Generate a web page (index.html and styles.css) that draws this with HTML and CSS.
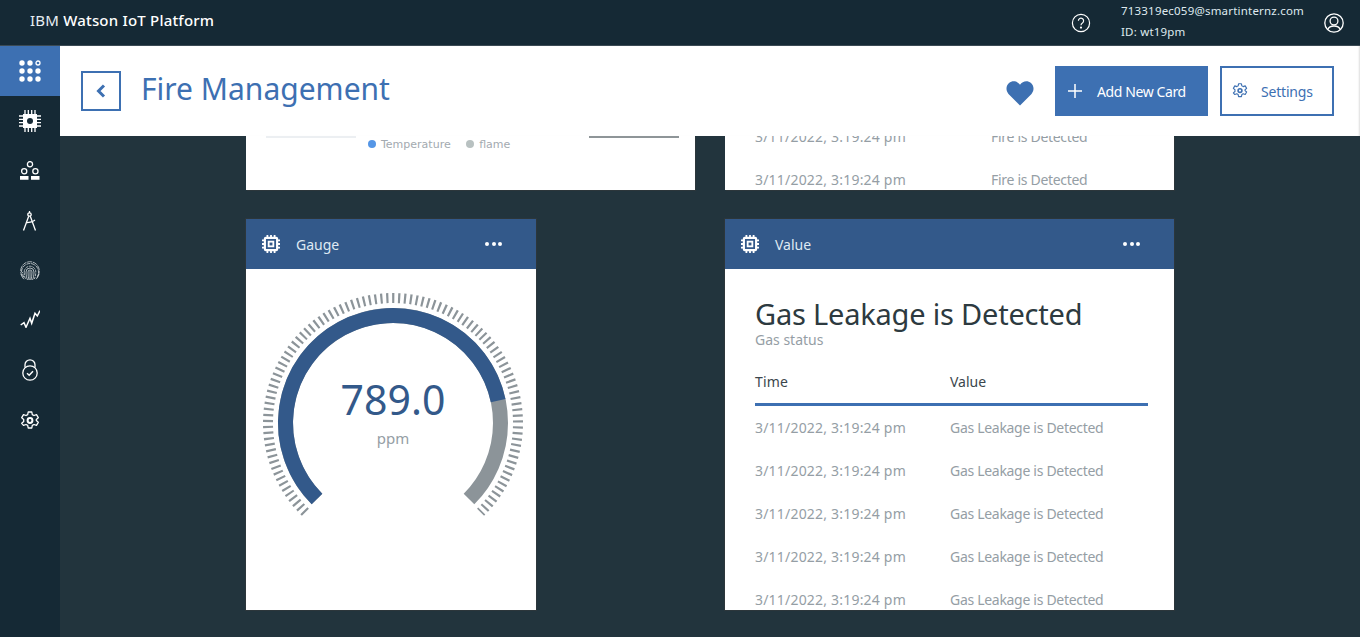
FILE: index.html
```html
<!DOCTYPE html>
<html>
<head>
  <title>IBM Watson IoT Platform</title>
  <link rel="stylesheet" href="styles.css">
</head>
<body>

  <svg class="sprites" width="0" height="0">
    <symbol id="chip" viewBox="0 0 20 20">
      <rect x="3.2" y="3.2" width="13.6" height="13.6" rx="1" fill="none" stroke="#fff" stroke-width="2.4"/>
      <rect x="7.4" y="7.4" width="5.2" height="5.2" fill="none" stroke="#fff" stroke-width="2"/>
      <path d="M6 0v3M10 0v3M14 0v3M6 17v3M10 17v3M14 17v3M0 6h3M0 10h3M0 14h3M17 6h3M17 10h3M17 14h3" stroke="#fff" stroke-width="2"/>
    </symbol>
    <symbol id="gear" viewBox="0 0 20 20">
      <path d="M8.2 1h3.600l.5 2.600 1.700.9 2.500-.9 1.800 3.100-2 1.700v1.200l2 1.700-1.800 3.100-2.500-.9-1.700.9-.5 2.600H8.200l-.5-2.600-1.700-.9-2.500.9L1.700 12.300l2-1.700V8.400l-2-1.700 1.800-3.100 2.500.9 1.700-.9z" stroke-linejoin="round"/>
      <circle cx="10" cy="9.5" r="2.4" stroke-width="2"/>
    </symbol>
  </svg>

  <div class="topbar">
    <div class="brand">IBM <b>Watson IoT Platform</b></div>
    <div class="top-right">
      <svg class="help-icon" width="20" height="20" viewBox="0 0 20 20" fill="none" stroke="#fff" stroke-width="1.2">
        <circle cx="10" cy="10" r="8.6"/>
        <path d="M7.4 7.8a2.6 2.6 0 1 1 4 2.2c-1 .6-1.4 1.1-1.4 2.2"/>
        <circle cx="10" cy="14.6" r=".5" fill="#fff"/>
      </svg>
      <div class="account">
        <div>713319ec059@smartinternz.com</div>
        <div>ID: wt19pm</div>
      </div>
      <svg class="user-icon" width="20" height="20" viewBox="0 0 20 20" fill="none" stroke="#fff" stroke-width="1.3">
        <circle cx="10" cy="10" r="9.2"/>
        <circle cx="10" cy="8" r="3.9"/>
        <path d="M3.8 16.4c1-2.6 3.4-3.4 6.2-3.4s5.2.8 6.2 3.4"/>
      </svg>
    </div>
  </div>

  <div class="layout">
    <div class="sidebar">
      <a class="side-item active">
        <svg width="22" height="22" viewBox="0 0 22 22" fill="#fff">
          <circle cx="3" cy="3" r="2.7"/><circle cx="11" cy="3" r="2.7"/><circle cx="19" cy="3" r="2" fill="none" stroke="#fff" stroke-width="1.3"/>
          <circle cx="3" cy="11" r="2.7"/><circle cx="11" cy="11" r="2.7"/><circle cx="19" cy="11" r="2.7"/>
          <circle cx="3" cy="19" r="2.7"/><circle cx="11" cy="19" r="2.7"/><circle cx="19" cy="19" r="2.7"/>
        </svg>
      </a>
      <a class="side-item">
        <svg width="22" height="22" viewBox="0 0 22 22">
          <rect x="4" y="4" width="14" height="14" fill="#fff"/>
          <circle cx="11" cy="11" r="3" fill="#152935"/>
          <path d="M6 0v22M9.3 0v22M12.7 0v22M16 0v22M0 6h22M0 9.3h22M0 12.7h22M0 16h22" stroke="#fff" stroke-width="1.3" fill="none" stroke-dasharray="4 14 4"/>
        </svg>
      </a>
      <a class="side-item">
        <svg width="20" height="20" viewBox="0 0 20 20" fill="none" stroke="#fff" stroke-width="1.3">
          <circle cx="10" cy="3.2" r="2.6"/>
          <circle cx="4.2" cy="10.3" r="2.6"/>
          <circle cx="15.4" cy="10.3" r="2.6"/>
          <path d="M0 15h8.5v3.7H0zM11 15h8.5v3.7H11z" fill="#fff" stroke="none"/>
        </svg>
      </a>
      <a class="side-item">
        <svg width="20" height="20" viewBox="0 0 20 20" fill="none" stroke="#fff" stroke-width="1.3">
          <circle cx="9.5" cy="3.5" r="1.7"/>
          <path d="M9.5 0v2M8.7 5.2L3.5 19.5M10.3 5.2L15.5 19.5M6 11.5c2 .2 4.500 0 7.500-1.500l1.500-1"/>
        </svg>
      </a>
      <a class="side-item">
        <svg width="20" height="20" viewBox="0 0 20 20" fill="none" stroke="#d5dadd" stroke-width=".8">
          <path d="M2.5 15.5A9.3 9.3 0 1 1 17.5 15.5" stroke-dasharray="5 .8"/>
          <path d="M1.5 11A8.5 8.5 0 0 1 18.500 11c0 2-.5 4-1.500 5.500M4 16.500c-1-1.500-1.500-3.500-1.500-5.500" stroke-dasharray="4 .8"/>
          <path d="M4.2 11A5.8 5.8 0 0 1 15.800 11c0 3-.5 5-1.500 7M5.500 17.800c-1-2-1.300-4.300-1.300-6.800" stroke-dasharray="3 .8"/>
          <path d="M6 11a4 4 0 0 1 8 0c0 3-.5 5.500-1.500 8M7.500 19C6.500 16.500 6 14 6 11"/>
          <path d="M8 11a2 2 0 0 1 4 0c0 3-.5 5.500-1 8M9 19c-.7-2.500-1-5-1-8"/>
          <path d="M10 10v9"/>
          <path d="M1 13c.5 2 1.500 3.700 3 5.200M19 13c-.5 2-1.500 3.700-3 5.200"/>
        </svg>
      </a>
      <a class="side-item">
        <svg class="trend-icon" width="20" height="18" viewBox="0 0 20 18" fill="none" stroke="#fff" stroke-width="1.5">
          <path d="M.7 15L4 12.7 6 17.3 10 8.3 11.7 13.3 15 3.3 17.3 6 20 .7"/>
        </svg>
      </a>
      <a class="side-item">
        <svg class="lock-icon" width="16" height="22" viewBox="0 0 16 22" fill="none" stroke="#fff" stroke-width="1.3">
          <circle cx="8" cy="14" r="7.2"/>
          <path d="M3 8.5V5.800a5 5 0 0 1 10 0v2.700"/>
          <path d="M5 14.300l2.200 2 3.800-4" stroke-width="1.5"/>
        </svg>
      </a>
      <a class="side-item">
        <svg width="20" height="20" fill="none" stroke="#fff" stroke-width="1.3"><use href="#gear"/></svg>
      </a>
    </div>

    <div class="main">
      <div class="page-head">
        <a class="back-btn">
          <svg width="10" height="14" viewBox="0 0 10 14" fill="none" stroke="#3d70b2" stroke-width="3"><path d="M8 1.5L2.5 7 8 12.5"/></svg>
        </a>
        <h1>Fire Management</h1>
        <svg class="heart" width="28" height="26" viewBox="0 0 28 26">
          <path d="M14 25.500L2.500 14C-.5 10.500 0 5.500 3 3c3.500-3 8.500-2 11 1.800C16.500 1 21.500 0 25 3c3 2.500 3.500 7.500.5 11z" fill="#3d70b2"/>
        </svg>
        <a class="btn btn-primary">
          <svg width="14" height="14" viewBox="0 0 14 14" stroke="#fff" stroke-width="1.5"><path d="M7 0v14M0 7h14"/></svg>
          Add New Card
        </a>
        <a class="btn btn-outline">
          <svg width="16" height="16" fill="none" stroke="#3d70b2" stroke-width="1.4"><use href="#gear"/></svg>
          Settings
        </a>
      </div>

      <div class="content">
        <div class="card-clip">
          <div class="chart-foot">
            <span class="axis axis-light"></span>
            <div class="legend">
              <span class="dot dot-blue"></span>Temperature
              <span class="dot dot-gray"></span>flame
            </div>
            <span class="axis axis-dark"></span>
          </div>
        </div>
        <div class="card-clip">
          <div class="rows">
            <div class="row"><span class="col-time">3/11/2022, 3:19:24 pm</span><span class="col-value">Fire is Detected</span></div>
            <div class="row"><span class="col-time">3/11/2022, 3:19:24 pm</span><span class="col-value">Fire is Detected</span></div>
          </div>
        </div>

        <div class="card card-gauge">
          <div class="card-head">
            <svg width="18" height="18"><use href="#chip"/></svg>
            <span class="card-title">Gauge</span>
            <span class="more"><i></i><i></i><i></i></span>
          </div>
          <div class="gauge">
            <svg width="290" height="290" viewBox="-147 -154 290 290">
              <path class="ticks" d="M-87.6 89.2A125 125 0 1 1 87.6 89.2"/>
              <path class="arc-rest" d="M-76 76A107.5 107.5 0 1 1 76 76"/>
              <path class="arc-value" d="M-76 76A107.5 107.5 0 1 1 105.15 -22.35"/>
            </svg>
            <div class="gauge-value">789.0</div>
            <div class="gauge-unit">ppm</div>
          </div>
        </div>

        <div class="card">
          <div class="card-head">
            <svg width="18" height="18"><use href="#chip"/></svg>
            <span class="card-title">Value</span>
            <span class="more"><i></i><i></i><i></i></span>
          </div>
          <div class="value-body">
            <div class="big-value">Gas Leakage is Detected</div>
            <div class="sub-value">Gas status</div>
            <div class="table-head"><span class="col-time2">Time</span><span>Value</span></div>
            <div class="row"><span class="col-time2">3/11/2022, 3:19:24 pm</span><span class="col-value">Gas Leakage is Detected</span></div>
            <div class="row"><span class="col-time2">3/11/2022, 3:19:24 pm</span><span class="col-value">Gas Leakage is Detected</span></div>
            <div class="row"><span class="col-time2">3/11/2022, 3:19:24 pm</span><span class="col-value">Gas Leakage is Detected</span></div>
            <div class="row"><span class="col-time2">3/11/2022, 3:19:24 pm</span><span class="col-value">Gas Leakage is Detected</span></div>
            <div class="row"><span class="col-time2">3/11/2022, 3:19:24 pm</span><span class="col-value">Gas Leakage is Detected</span></div>
          </div>
        </div>
      </div>
    </div>
  </div>

</body>
</html>
```
FILE: styles.css
```css
* {
  box-sizing: border-box;
}

body {
  font-family: "Noto Sans", Roboto, sans-serif;
  background-color: #22343d;
  margin: 0;
  height: 637px;
  overflow: hidden;
}

.sprites {
  position: absolute;
}

.topbar {
  background-color: #152935;
  border-bottom: 1px solid #3b4a54;
  height: 46px;
  display: flex;
  align-items: center;
  justify-content: space-between;
  color: #fff;
}

.brand {
  margin: 0 0 5px 30px;
  font-size: 15px;
  letter-spacing: 0.2px;
  color: #e8eef3;
}

.brand b {
  font-weight: 500;
  color: #fff;
}

.top-right {
  display: flex;
  align-items: center;
}

.account {
  margin: 0 19px 4px 30px;
  font-size: 11.5px;
  line-height: 21px;
  color: #dfe9ef;
  width: 184px;
  letter-spacing: 0.2px;
}

.user-icon {
  margin-right: 16px;
}

.layout {
  display: flex;
  height: 591px;
}

.sidebar {
  width: 60px;
  background-color: #152935;
  flex: none;
}

.side-item {
  display: flex;
  align-items: center;
  justify-content: center;
  height: 50px;
}

.side-item.active {
  background-color: #3d70b2;
}

.trend-icon {
  margin-bottom: 4px;
}

.lock-icon {
  margin-bottom: 2px;
}

.main {
  flex: 1;
  min-width: 0;
}

.page-head {
  background-color: #fff;
  height: 90px;
  display: flex;
  align-items: center;
  padding-left: 21px;
  box-shadow: inset -2px 0 2px -1px #ddd;
}

.back-btn {
  width: 40px;
  height: 40px;
  border: 2px solid #3d70b2;
  display: flex;
  align-items: center;
  justify-content: center;
  flex: none;
}

h1 {
  font-size: 30px;
  font-weight: 400;
  color: #3d70b2;
  margin: 0 0 6px 20px;
  flex: 1;
}

.heart {
  margin-right: 21px;
  margin-top: 3px;
}

.btn {
  height: 50px;
  display: flex;
  align-items: center;
  font-size: 14px;
}

.btn-primary {
  width: 153px;
  background-color: #3d70b2;
  color: #fff;
  padding-left: 13px;
  gap: 15px;
  margin-right: 12px;
  letter-spacing: -0.4px;
}

.btn-outline {
  width: 114px;
  border: 2px solid #3d70b2;
  color: #3d70b2;
  padding-left: 10px;
  gap: 13px;
  margin-right: 26px;
  letter-spacing: -0.2px;
}

.content {
  display: grid;
  grid-template-columns: 449px 449px;
  grid-template-rows: 54px 391px;
  column-gap: 30px;
  row-gap: 29px;
  padding: 0 0 0 186px;
  height: 501px;
  overflow: hidden;
}

.card-clip {
  background-color: #fff;
  overflow: hidden;
  display: flex;
  flex-direction: column;
  justify-content: flex-end;
  box-shadow: 1px 1px 0 #2c363b;
}

.chart-foot {
  height: 54px;
  display: flex;
  padding: 0 16px 0 20px;
}

.axis {
  width: 90px;
  height: 2px;
}

.axis-light {
  background-color: #eceff2;
}

.axis-dark {
  background-color: #8e9598;
}

.legend {
  flex: 1;
  font-family: "DejaVu Sans", sans-serif;
  font-size: 11px;
  color: #a3aab0;
  padding: 1px 0 0 12px;
  line-height: 16px;
}

.dot {
  display: inline-block;
  width: 8px;
  height: 8px;
  border-radius: 50%;
  margin-right: 5px;
}

.dot-blue {
  background-color: #5596e6;
}

.dot-gray {
  background-color: #b8c1c1;
  margin-left: 12px;
}

.rows {
  padding: 0 30px;
  margin-bottom: -11px;
}

.row {
  display: flex;
  height: 43px;
  align-items: center;
  font-size: 14px;
  color: #959ea5;
  white-space: nowrap;
}

.col-time {
  width: 236px;
  letter-spacing: 0.2px;
}

.col-time2 {
  width: 195px;
  letter-spacing: 0.2px;
}

.col-value {
  letter-spacing: -0.3px;
}

.card {
  background-color: #fff;
  overflow: hidden;
  height: 391px;
  box-shadow: 0 0 0 1px #2c363b;
}

.card-gauge {
  width: 290px;
}

.card-head {
  background-color: #33598a;
  height: 50px;
  display: flex;
  align-items: center;
  padding: 0 34px 0 16px;
  color: #dfe9f3;
  font-size: 14px;
}

.card-title {
  margin-left: 16px;
  flex: 1;
}

.more {
  display: flex;
  gap: 2.5px;
}

.more i {
  width: 4px;
  height: 4px;
  border-radius: 50%;
  background-color: #fff;
}

.gauge {
  position: relative;
  height: 341px;
}

.gauge svg {
  display: block;
}

.ticks {
  fill: none;
  stroke: #8c9499;
  stroke-width: 10px;
  stroke-dasharray: 2.2 3.69;
}

.arc-rest {
  fill: none;
  stroke: #8c9499;
  stroke-width: 15px;
}

.arc-value {
  fill: none;
  stroke: #33598a;
  stroke-width: 15px;
}

.gauge-value {
  position: absolute;
  left: 4px;
  right: 0;
  top: 103px;
  text-align: center;
  font-size: 41px;
  line-height: 54px;
  color: #33598a;
}

.gauge-unit {
  position: absolute;
  left: 4px;
  right: 0;
  top: 157px;
  text-align: center;
  font-size: 15px;
  line-height: 24px;
  color: #959ea5;
}

.value-body {
  padding: 27px 26px 0 30px;
}

.big-value {
  font-size: 29px;
  line-height: 35px;
  letter-spacing: -0.2px;
  color: #2d3a40;
}

.sub-value {
  font-size: 14px;
  line-height: 18px;
  color: #959ea5;
}

.table-head {
  display: flex;
  height: 57px;
  padding-top: 23px;
  line-height: 19px;
  font-size: 14px;
  color: #3b464c;
  border-bottom: 3px solid #3d70b2;
}
```
